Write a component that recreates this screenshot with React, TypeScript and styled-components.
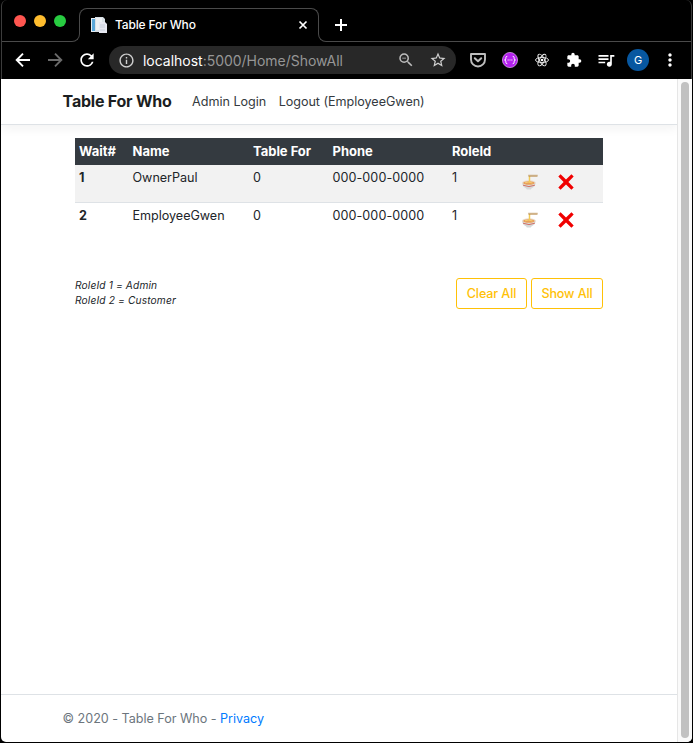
import React from 'react';
import styled, { createGlobalStyle } from 'styled-components';
import {
  MdRefresh,
  MdInfoOutline,
  MdStarBorder,
  MdZoomOut,
  MdExtension,
  MdQueueMusic,
  MdMoreVert,
} from 'react-icons/md';

const GlobalStyle = createGlobalStyle`
  *, *::before, *::after { box-sizing: border-box; }
  body {
    margin: 0;
    background: #000;
    color: #212529;
    font-family: Inter, "Liberation Sans", sans-serif;
    font-size: 12.6px;
    letter-spacing: -0.03px;
    line-height: 19px;
    overflow: hidden;
  }
  svg { display: block; flex: none; }
`;

const Window = styled.div`
  display: flex;
  flex-direction: column;
  width: 693px;
  height: 743px;
  padding: 0 1px 1px;
  background: #000;
`;

const Chrome = styled.header`
  height: 79px;
  flex: none;
  border: solid #3c3c3c;
  border-width: 0 1px;
  border-radius: 6px 6px 0 0;
`;

const TabStrip = styled.div`
  display: flex;
  height: 42px;
  color: #fff;
`;

const StripEdge = styled.div<{ $side: 'left' | 'right' }>`
  position: relative;
  display: flex;
  align-items: center;
  ${({ $side }) =>
    $side === 'left' ? 'width: 78px; margin-right: -1px; padding-left: 12px;' : 'flex: 1; margin-left: -1px; padding: 8px 0 0 16px;'}
  &::after {
    content: '';
    position: absolute;
    inset: auto 0 0 0;
    height: 12px;
    border-bottom: 1px solid #4a4a4a;
    ${({ $side }) =>
      $side === 'left'
        ? 'border-right: 1px solid #4a4a4a; border-bottom-right-radius: 8px;'
        : 'border-left: 1px solid #4a4a4a; border-bottom-left-radius: 8px;'}
  }
`;

const Lights = styled.div`
  display: flex;
  gap: 8px;
`;

const Light = styled.i<{ $color: string }>`
  width: 12px;
  height: 12px;
  border-radius: 50%;
  background: ${({ $color }) => $color};
`;

const Tab = styled.div`
  display: flex;
  align-items: center;
  width: 240px;
  height: 22px;
  margin-top: 8px;
  padding: 11px 10px 0 11px;
  border: solid #4a4a4a;
  border-width: 1px 1px 0;
  border-radius: 8px 8px 0 0;
  color: #fff;
`;

const TabTitle = styled.span`
  flex: 1;
  margin-left: 8px;
  font-size: 12px;
  font-weight: 500;
  letter-spacing: -0.15px;
  line-height: 16px;
  white-space: nowrap;
`;

const Toolbar = styled.div`
  display: flex;
  align-items: center;
  height: 36px;
  padding: 0 4px 0 11px;
  color: #fff;
`;

const NavButtons = styled.div`
  display: flex;
  width: 96px;
  gap: 12px;
`;

const AddressBar = styled.div`
  display: flex;
  flex: none;
  align-items: center;
  width: 347px;
  height: 28px;
  padding: 0 9px 0 9px;
  border-radius: 14px;
  background: #282828;
  color: #d0d0d0;
`;

const Url = styled.span`
  flex: 1;
  margin-left: 8px;
  color: #969696;
  font-size: 14px;
  letter-spacing: -0.02px;
  line-height: 17px;
`;

const Host = styled.span`
  color: #fff;
`;

const AddressActions = styled.div`
  display: flex;
  gap: 14px;
`;

const Extensions = styled.div`
  display: grid;
  grid-template-columns: repeat(7, 32px);
  align-items: center;
  justify-items: center;
  margin-left: 6px;
`;

const Avatar = styled.span`
  width: 22px;
  height: 22px;
  border-radius: 50%;
  background: #0757a0;
  font-size: 11px;
  line-height: 22px;
  text-align: center;
`;

const Viewport = styled.div`
  display: flex;
  flex: 1;
  overflow: hidden;
  border-radius: 0 0 5px 5px;
  background: #fff;
`;

const Page = styled.div`
  display: flex;
  flex-direction: column;
  width: 676px;
`;

const ScrollTrack = styled.div`
  width: 15px;
  padding: 3px 3px 4px;
  border-left: 1px solid #e6e6e6;
  background: #fafafa;
`;

const ScrollThumb = styled.div`
  width: 8px;
  height: 100%;
  border-radius: 4px;
  background: #c1c1c1;
`;

const Navbar = styled.nav`
  display: flex;
  align-items: center;
  height: 46px;
  padding-left: 61.6px;
  border-bottom: 1px solid #dee2e6;
  box-shadow: 0 4px 10px rgba(0, 0, 0, 0.05);
`;

const Brand = styled.span`
  width: 129.5px;
  color: #1b1e21;
  font-size: 16px;
  font-weight: 700;
  letter-spacing: -0.22px;
`;

const NavLink = styled.a`
  margin-right: 12.5px;
  color: #343a40;
`;

const Main = styled.main`
  flex: 1;
  padding: 13px 74px 0;
`;

const Table = styled.table`
  width: 528px;
  table-layout: fixed;
  border-collapse: separate;
  border-spacing: 0;
`;

const HeadCell = styled.th`
  height: 27px;
  padding: 0 4px;
  background: #343a40;
  color: #fff;
  font-size: 13px;
  font-weight: 700;
  text-align: left;
  white-space: nowrap;
`;

const Cell = styled.td<{ $bold?: boolean }>`
  height: 38px;
  padding: 3px 4px;
  border-bottom: 1px solid transparent;
  font-weight: ${({ $bold }) => ($bold ? 700 : 400)};
  vertical-align: top;
  white-space: nowrap;
`;

const PhoneCell = styled(Cell)`
  letter-spacing: 0.06px;
`;

const ActionCell = styled(Cell)`
  padding-top: 9px;
`;

const Row = styled.tr<{ $striped: boolean }>`
  background: ${({ $striped }) => ($striped ? '#f2f2f2' : '#fff')};
  & > td {
    border-bottom-color: ${({ $striped }) => ($striped ? '#dee2e6' : 'transparent')};
  }
`;

const Below = styled.div`
  display: flex;
  justify-content: space-between;
  width: 528px;
  margin-top: 37px;
`;

const Legend = styled.p`
  margin: 0;
  font-size: 10.2px;
  font-style: italic;
  letter-spacing: 0.14px;
  line-height: 15px;
`;

const Actions = styled.div`
  display: flex;
  gap: 4px;
`;

const OutlineButton = styled.button<{ $width: number }>`
  width: ${({ $width }) => $width}px;
  height: 31px;
  padding: 0;
  border: 1px solid #ffc107;
  border-radius: 3px;
  background: transparent;
  color: #ffc107;
  font: inherit;
  font-weight: 500;
  letter-spacing: -0.12px;
  white-space: nowrap;
`;

const Footer = styled.footer`
  height: 48px;
  padding: 14px 0 0 61.6px;
  border-top: 1px solid #dee2e6;
  color: #6c757d;
`;

const PrivacyLink = styled.a`
  color: #007bff;
`;

const Favicon = () => (
  <svg width="16" height="16" viewBox="0 0 16 16">
    <path d="M0 1h10v14H0z" fill="#e7edf2" />
    <path d="M1 2h3v12H1z" fill="#5aa7d9" />
    <path d="M4 0h8l2 2v13H4z" fill="#d8e0e6" />
    <path d="M5 1h6v12H5z" fill="#edf1f4" />
    <path d="M8 5h6l2 2v9H8z" fill="#e7e8f1" />
    <path d="M9 8h5M9 10h5M9 13h5" stroke="#bfc8d7" strokeWidth=".8" />
  </svg>
);

const CloseIcon = () => (
  <svg width="10" height="10" viewBox="0 0 10 10" stroke="#fff" strokeWidth="1.7">
    <path d="m1.500 1.500 7 7m0-7-7 7" />
  </svg>
);

const PlusIcon = () => (
  <svg width="14" height="14" viewBox="0 0 14 14" stroke="#fff" strokeWidth="2">
    <path d="M7 1v12M1 7h12" />
  </svg>
);

const ArrowIcon = ({ forward = false }: { forward?: boolean }) => (
  <svg width="20" height="20" viewBox="0 0 20 20" fill="none" stroke={forward ? '#6b6b6b' : '#fff'} strokeWidth="1.900">
    <path d={forward ? 'M3 10h13M10 3.700l6.300 6.300-6.300 6.300' : 'M17 10H4M10 3.700 3.700 10l6.300 6.300'} />
  </svg>
);

const Pocket = () => (
  <svg width="16" height="16" viewBox="0 0 16 16" fill="none" stroke="#bdbdbd" strokeWidth="1.9" strokeLinecap="round" strokeLinejoin="round">
    <path d="M1 2h14v5.5a7 7 0 0 1-14 0z" />
    <path d="m4.8 6.3 3.2 3 3.2-3" strokeWidth="2" />
  </svg>
);

const Braces = () => (
  <svg width="16" height="16" viewBox="0 0 16 16" fill="none" stroke="#fff" strokeWidth="1">
    <circle cx="8" cy="8" r="7.6" fill="#b420ee" stroke="#e3a9f7" strokeWidth=".7" />
    <path d="M5.3 4.3q-1.5 0-1.5 1.5v1q0 1.2-1.3 1.2 1.3 0 1.3 1.2v1q0 1.5 1.5 1.5M10.7 4.3q1.5 0 1.5 1.5v1q0 1.2 1.3 1.2-1.3 0-1.3 1.2v1q0 1.5-1.5 1.5" />
    <path d="M5.6 8h1.1M7.5 8h1M9.3 8h1.1" />
  </svg>
);

const Atom = () => (
  <svg width="14" height="14" viewBox="0 0 14 14" fill="none" stroke="#f1f1f1" strokeWidth=".9">
    <ellipse cx="7" cy="7" rx="6.5" ry="2.6" />
    <ellipse cx="7" cy="7" rx="6.5" ry="2.6" transform="rotate(60 7 7)" />
    <ellipse cx="7" cy="7" rx="6.5" ry="2.6" transform="rotate(120 7 7)" />
    <circle cx="7" cy="7" r="1.3" fill="#fff" stroke="none" />
  </svg>
);

const Noodles = () => (
  <svg width="16" height="16" viewBox="0 0 16 16">
    <path d="M0 8.800c.3 3 1.900 4.800 4.200 5.600l.6 1h4l.6-1c2.300-.8 4-2.600 4.300-5.600z" fill="#d5d9d9" />
    <ellipse cx="6.900" cy="8.700" rx="6.800" ry="2.500" fill="#eadccd" />
    <ellipse cx="6.900" cy="9" rx="5.700" ry="1.800" fill="#e79f5b" />
    <path d="M3 8.800q3-1.500 7.500.2" fill="none" stroke="#f6cd74" />
    <path d="M1 11.200q6 2.800 11.900 0" fill="none" stroke="#d36558" strokeWidth=".9" />
    <path d="M7.500 8.500V2" stroke="#f2cb55" strokeWidth="1.500" />
    <path d="M6.200 1.300h9.500M6.500 2.300h9" stroke="#bb9255" strokeWidth=".8" />
  </svg>
);

const Cross = () => (
  <svg width="16" height="16" viewBox="0 0 16 16">
    <path d="M2.6.3 8 5.6 13.4.3l2.3 2.3L10.4 8l5.3 5.4-2.3 2.3L8 10.4l-5.400 5.300-2.300-2.300L5.600 8 .3 2.600z" fill="#f00000" />
  </svg>
);

const guests = [
  { wait: 1, name: 'OwnerPaul', party: 0, phone: '000-000-0000', role: 1 },
  { wait: 2, name: 'EmployeeGwen', party: 0, phone: '000-000-0000', role: 1 },
];

const columns = [
  { label: 'Wait#', width: 53.5 },
  { label: 'Name', width: 120.5 },
  { label: 'Table For', width: 79.5 },
  { label: 'Phone', width: 119.5 },
  { label: 'RoleId', width: 70 },
  { label: '', width: 36 },
  { label: '', width: 49 },
];

export default function App() {
  return (
    <>
      <GlobalStyle />
      <Window>
        <Chrome>
          <TabStrip>
            <StripEdge $side="left">
              <Lights>
                <Light $color="#ff5650" />
                <Light $color="#ffbd2e" />
                <Light $color="#28cc41" />
              </Lights>
            </StripEdge>
            <Tab>
              <Favicon />
              <TabTitle>Table For Who</TabTitle>
              <CloseIcon />
            </Tab>
            <StripEdge $side="right">
              <PlusIcon />
            </StripEdge>
          </TabStrip>
          <Toolbar>
            <NavButtons>
              <ArrowIcon />
              <ArrowIcon forward />
              <MdRefresh size={20} />
            </NavButtons>
            <AddressBar>
              <MdInfoOutline size={17} />
              <Url>
                <Host>localhost</Host>:5000/Home/ShowAll
              </Url>
              <AddressActions>
                <MdZoomOut size={18} color="#bdbdbd" />
                <MdStarBorder size={18} />
              </AddressActions>
            </AddressBar>
            <Extensions>
              <Pocket />
              <Braces />
              <Atom />
              <MdExtension size={16} />
              <MdQueueMusic size={20} />
              <Avatar>G</Avatar>
              <MdMoreVert size={20} />
            </Extensions>
          </Toolbar>
        </Chrome>
        <Viewport>
          <Page>
            <Navbar>
              <Brand>Table For Who</Brand>
              <NavLink>Admin Login</NavLink>
              <NavLink>Logout (EmployeeGwen)</NavLink>
            </Navbar>
            <Main>
              <Table>
                <colgroup>
                  {columns.map((c, i) => (
                    <col key={i} width={c.width} />
                  ))}
                </colgroup>
                <thead>
                  <tr>
                    {columns.map((c, i) => (
                      <HeadCell key={i}>{c.label}</HeadCell>
                    ))}
                  </tr>
                </thead>
                <tbody>
                  {guests.map((g, i) => (
                    <Row key={g.wait} $striped={i % 2 === 0}>
                      <Cell $bold>{g.wait}</Cell>
                      <Cell>{g.name}</Cell>
                      <Cell>{g.party}</Cell>
                      <PhoneCell>{g.phone}</PhoneCell>
                      <Cell>{g.role}</Cell>
                      <ActionCell><Noodles /></ActionCell>
                      <ActionCell><Cross /></ActionCell>
                    </Row>
                  ))}
                </tbody>
              </Table>
              <Below>
                <Legend>
                  RoleId 1 = Admin
                  <br />
                  RoleId 2 = Customer
                </Legend>
                <Actions>
                  <OutlineButton $width={71}>Clear All</OutlineButton>
                  <OutlineButton $width={72}>Show All</OutlineButton>
                </Actions>
              </Below>
            </Main>
            <Footer>
              © 2020 - Table For Who - <PrivacyLink>Privacy</PrivacyLink>
            </Footer>
          </Page>
          <ScrollTrack>
            <ScrollThumb />
          </ScrollTrack>
        </Viewport>
      </Window>
    </>
  );
}
